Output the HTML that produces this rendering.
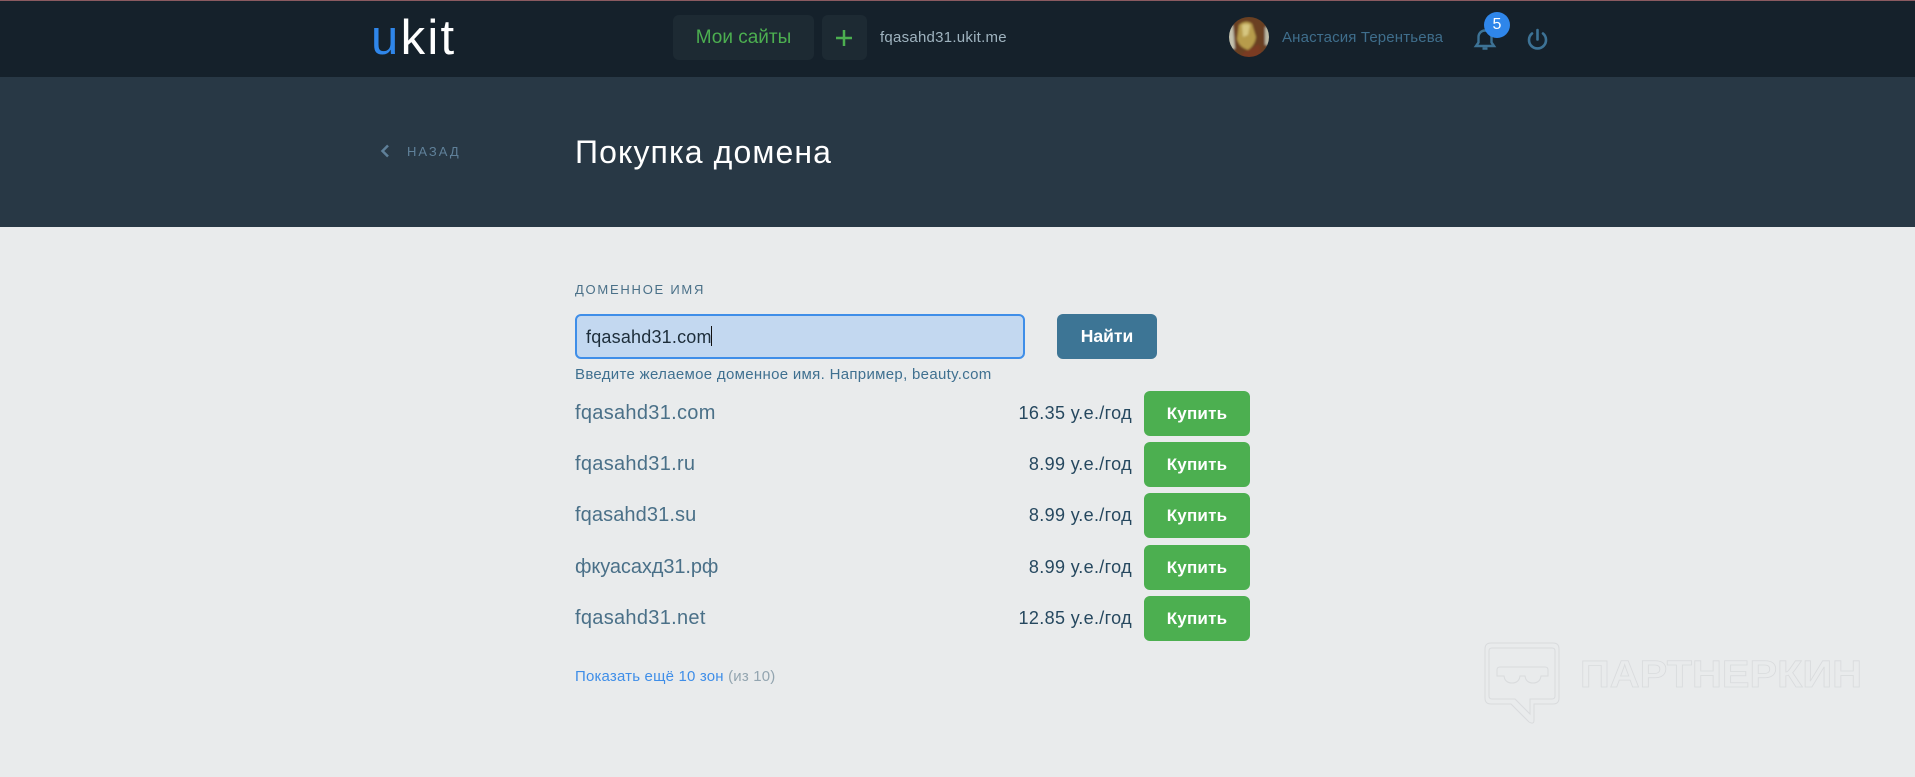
<!DOCTYPE html>
<html lang="ru"><head><meta charset="utf-8"><title>Покупка домена</title>
<style>
*{box-sizing:border-box;margin:0;padding:0}
html,body{width:1915px;height:777px;overflow:hidden;background:#e9ebec;font-family:"Liberation Sans","Noto Sans CJK SC",sans-serif}
.t{position:absolute;white-space:nowrap;line-height:1}
.b{position:absolute;border-radius:6px;display:flex;align-items:center;justify-content:center;white-space:nowrap}
.buy{left:1144px;width:106px;height:45px;background:#4caf50;color:#fff;font-size:17px;font-weight:bold;letter-spacing:.2px}
.name{left:575px;font-size:20px;color:#4a7088;letter-spacing:.3px}
.price{right:783px;font-size:18px;color:#26485f;letter-spacing:.35px}
svg{position:absolute}
</style></head><body>
<div style="position:absolute;left:0;top:0;width:1915px;height:77px;background:#15212b"></div>
<div style="position:absolute;left:0;top:0;width:1915px;height:1px;background:#8a5a60"></div>
<div style="position:absolute;left:0;top:77px;width:1915px;height:150px;background:#283845"></div>

<div class="t" style="left:371px;top:14px;font-size:49px;color:#fff;letter-spacing:2.300px"><span style="color:#2f86ea">u</span>kit</div>
<div class="b" style="left:673px;top:15px;width:141px;height:45px;padding-top:1px;background:#1d2a33;color:#4caf50;font-size:19px">Мои сайты</div>
<div class="b" style="left:822px;top:15px;width:45px;height:45px;background:#1d2a33"></div>
<svg style="left:836px;top:30px" width="16" height="16"><path d="M8 0v16M0 8h16" stroke="#4caf50" stroke-width="2.500"/></svg>
<div class="t" style="left:880px;top:30px;font-size:15px;color:#9fb3bf;letter-spacing:.25px">fqasahd31.ukit.me</div>

<svg style="left:1229px;top:17px" width="40" height="40" viewBox="0 0 40 40">
<defs><clipPath id="c"><circle cx="20" cy="20" r="20"/></clipPath><filter id="f" x="-10%" y="-10%" width="120%" height="120%"><feGaussianBlur stdDeviation="1"/></filter></defs>
<g clip-path="url(#c)"><g filter="url(#f)"><rect x="-2" y="-2" width="44" height="44" fill="#6b3f22"/>
<path d="M-2 8H4L6 32H-2Z" fill="#c4c2ae"/>
<path d="M36 10H42V28H36Z" fill="#bdbaa6"/>
<path d="M10 8Q17 2 23 7L27 20Q26 28 19 33Q10 30 8 22Z" fill="#b79c4c"/>
<path d="M13 8Q17 6 21 8L19 18L14 20Z" fill="#d6c680"/>
<path d="M14 36L30 27L34 42H10Z" fill="#7a3a20"/></g></g></svg>
<div class="t" style="left:1282px;top:30px;font-size:15px;color:#3f6e8c;letter-spacing:.15px">Анастасия Терентьева</div>

<svg style="left:1473px;top:27px" width="24" height="24" viewBox="0 0 24 24" fill="none" stroke="#3d7396" stroke-width="2.400"><path d="M3 19h18l-2.500-3.500V10a6.500 6.500 0 0 0-13 0v5.500Z"/><path d="M9.500 21.500h5" stroke-width="2.500"/></svg>
<div class="b" style="left:1484px;top:12px;width:26px;height:26px;border-radius:50%;background:#2f86ea;color:#fff;font-size:16px">5</div>
<svg style="left:1526px;top:27px" width="24" height="24" viewBox="0 0 24 24" fill="none" stroke="#3d7396" stroke-width="2.600" stroke-linecap="round"><path d="M11.500 3v9.500"/><path d="M6 6.500a8.500 8.500 0 1 0 11 0"/></svg>

<svg style="left:380px;top:144px" width="10" height="14" viewBox="0 0 10 14" fill="none" stroke="#5f8099" stroke-width="2.500"><path d="M8 1.500L2.500 7 8 12.500"/></svg>
<div class="t" style="left:407px;top:145px;font-size:13px;color:#5f8099;letter-spacing:2px">НАЗАД</div>
<div class="t" style="left:575px;top:136px;font-size:32px;color:#fff;letter-spacing:1.1px">Покупка домена</div>

<div class="t" style="left:575px;top:283px;font-size:13px;color:#4a7088;letter-spacing:1.75px">ДОМЕННОЕ ИМЯ</div>
<div style="position:absolute;left:575px;top:314px;width:450px;height:45px;background:#c3d8f0;border:2px solid #3f8ee8;border-radius:6px"></div>
<div class="t" style="left:586px;top:328px;font-size:18px;color:#1d2d3a;letter-spacing:.2px">fqasahd31.com</div>
<div style="position:absolute;left:711px;top:326px;width:1px;height:20px;background:#111"></div>
<div class="b" style="left:1057px;top:314px;width:100px;height:45px;background:#3d7595;color:#fff;font-size:17.500px;font-weight:bold">Найти</div>
<div class="t" style="left:575px;top:367px;font-size:15px;color:#3f7090;letter-spacing:.31px">Введите желаемое доменное имя. Например, beauty.com</div>

<div class="t name" style="top:403px">fqasahd31.com</div><div class="t price" style="top:404px">16.35 у.е./год</div><div class="b buy" style="top:391px">Купить</div>
<div class="t name" style="top:454px">fqasahd31.ru</div><div class="t price" style="top:455px">8.99 у.е./год</div><div class="b buy" style="top:442px">Купить</div>
<div class="t name" style="top:505px;letter-spacing:.1px">fqasahd31.su</div><div class="t price" style="top:506px">8.99 у.е./год</div><div class="b buy" style="top:493px">Купить</div>
<div class="t name" style="top:557px;letter-spacing:-.1px">фкуасахд31.рф</div><div class="t price" style="top:558px">8.99 у.е./год</div><div class="b buy" style="top:545px">Купить</div>
<div class="t name" style="top:608px">fqasahd31.net</div><div class="t price" style="top:609px">12.85 у.е./год</div><div class="b buy" style="top:596px">Купить</div>

<div class="t" style="left:575px;top:669px;font-size:15px;color:#3f8ee8;letter-spacing:.18px">Показать ещё 10 зон <span style="color:#93a5b0">(из 10)</span></div>

<svg style="left:1480px;top:638px" width="390" height="92" viewBox="1480 638 390 92" fill="none" stroke="#d9dbdd" stroke-width="1">
<path d="M1491 643h62q6 0 6 6v49q0 6-6 6h-19v16q0 5-5 2l-18-18h-20q-6 0-6-6v-49q0-6 6-6Z"/>
<path d="M1492 648h60q3 0 3 3v45q0 3-3 3h-22v15l-15-15h-23q-3 0-3-3v-45q0-3 3-3Z"/>
<path d="M1500 667h45q3 0 3 3v6h-7q-1 7-8 7t-8-7h-5q-1 7-8 7t-8-7h-7v-6q0-3 3-3Z"/>
<text x="1580" y="687" font-family="Liberation Sans" font-size="38" font-weight="bold" textLength="282" lengthAdjust="spacingAndGlyphs" stroke-width=".8">ПАРТНЕРКИН</text>
</svg>
</body></html>
